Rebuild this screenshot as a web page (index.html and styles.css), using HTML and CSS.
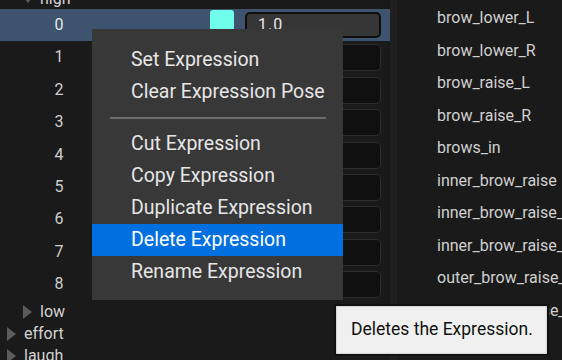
FILE: index.html
```html
<!DOCTYPE html>
<html lang="en">

<head>
    <meta charset="UTF-8" />
    <title>Expression Poses</title>
    <link rel="stylesheet" href="styles.css">
</head>

<body>
    <div class="editor">
        <div class="tree">
            <div class="group indent"><span class="arrow open"></span><span>high</span></div>
            <div class="pose selected"><span class="num">0</span><span class="swatch"></span><span class="value">1.0</span></div>
            <div class="pose"><span class="num">1</span><span class="value"></span></div>
            <div class="pose"><span class="num">2</span><span class="value"></span></div>
            <div class="pose"><span class="num">3</span><span class="value"></span></div>
            <div class="pose"><span class="num">4</span><span class="value"></span></div>
            <div class="pose"><span class="num">5</span><span class="value"></span></div>
            <div class="pose"><span class="num">6</span><span class="value"></span></div>
            <div class="pose"><span class="num">7</span><span class="value"></span></div>
            <div class="pose"><span class="num">8</span><span class="value"></span></div>
            <div class="group indent"><span class="arrow"></span><span>low</span></div>
            <div class="group"><span class="arrow"></span><span>effort</span></div>
            <div class="group"><span class="arrow"></span><span>laugh</span></div>
        </div>
        <div class="splitter"></div>
        <div class="names">
            <div class="name">brow_lower_L</div>
            <div class="name">brow_lower_R</div>
            <div class="name">brow_raise_L</div>
            <div class="name">brow_raise_R</div>
            <div class="name">brows_in</div>
            <div class="name">inner_brow_raise</div>
            <div class="name">inner_brow_raise_L</div>
            <div class="name">inner_brow_raise_R</div>
            <div class="name">outer_brow_raise_L</div>
            <div class="name">outer_brow_raise_R</div>
            <div class="name">cheek_raise</div>
        </div>
    </div>

    <div class="menu">
        <div class="item">Set Expression</div>
        <div class="item">Clear Expression Pose</div>
        <div class="separator"></div>
        <div class="item">Cut Expression</div>
        <div class="item">Copy Expression</div>
        <div class="item">Duplicate Expression</div>
        <div class="item active">Delete Expression</div>
        <div class="item">Rename Expression</div>
    </div>

    <div class="tooltip">Deletes the Expression.</div>
</body>

</html>
```

FILE: styles.css
```css
body {
    margin: 0;
    background: #1a1a1a;
    color: #d2d2d2;
    font-family: Roboto, "Liberation Sans", sans-serif;
    font-size: 16px;
    height: 360px;
    overflow: hidden;
}

.editor {
    display: flex;
    height: 360px;
}

/* left tree of expression poses */
.tree {
    width: 390px;
    flex: none;
    margin-top: -13px;
}

.group {
    display: flex;
    align-items: center;
    height: 22px;
}

.group.indent {
    padding-left: 16px;
}

.arrow {
    width: 17px;
    margin-left: 7px;
    display: flex;
    align-items: center;
}

.arrow::before {
    content: "";
    border-left: 9px solid #5c5c5c;
    border-top: 7px solid transparent;
    border-bottom: 7px solid transparent;
}

.arrow.open {
    margin-left: 0;
    width: 24px;
    justify-content: center;
}

.arrow.open::before {
    border-top: 9px solid #5c5c5c;
    border-left: 7px solid transparent;
    border-right: 7px solid transparent;
    border-bottom: none;
}

.pose {
    display: grid;
    grid-template-columns: 118px 92px 24px 147px;
    align-items: start;
    height: 32.4px;
    color: #cfcfcf;
}

.pose.selected {
    background: #3e546e;
    color: #e8e8e8;
}

.num {
    text-align: center;
    line-height: 32px;
}

.swatch {
    grid-column: 3;
    height: 23px;
    margin-top: 1px;
    background: #70fde9;
    border-radius: 3px;
}

.value {
    grid-column: 4;
    margin: 3px 0 0 11px;
    height: 27px;
    box-sizing: border-box;
    border: 1px solid #2d2d2d;
    border-radius: 5px;
    background: #0f0f0f;
    padding-left: 12px;
    line-height: 25px;
}

.selected .value {
    height: 26px;
    border: 2px solid #0e0e0e;
    background: #363636;
    padding-left: 11px;
    line-height: 22px;
    letter-spacing: 1px;
}

.splitter {
    width: 7px;
    flex: none;
    background: #1f1f1f;
}

/* right list of curve names */
.names {
    flex: 1;
    overflow: hidden;
    padding: 2px 0 0 40px;
}

.name {
    height: 32.5px;
    line-height: 32px;
    white-space: nowrap;
    color: #d0d0d0;
}

/* context menu */
.menu {
    position: absolute;
    left: 92px;
    top: 29px;
    width: 251px;
    box-sizing: border-box;
    padding: 15px 0 12px;
    background: #383838;
    color: #e6e6e6;
    font-size: 19.5px;
}

.item {
    height: 32px;
    line-height: 32px;
    padding-left: 39px;
}

.item.active {
    background: #0070e0;
    color: #fff;
}

.separator {
    height: 20px;
    display: flex;
    align-items: center;
    padding: 0 17px 0 18px;
}

.separator::before {
    content: "";
    flex: 1;
    height: 2px;
    background: #6c6c6c;
}

.tooltip {
    position: absolute;
    left: 334px;
    top: 304px;
    width: 215px;
    height: 52px;
    box-sizing: border-box;
    border: 2px solid #101010;
    background: #f0f0f0;
    color: #111;
    font-size: 17.5px;
    line-height: 46px;
    padding-left: 15px;
    box-shadow: inset 0 0 2px #9a9a9a;
}
```
